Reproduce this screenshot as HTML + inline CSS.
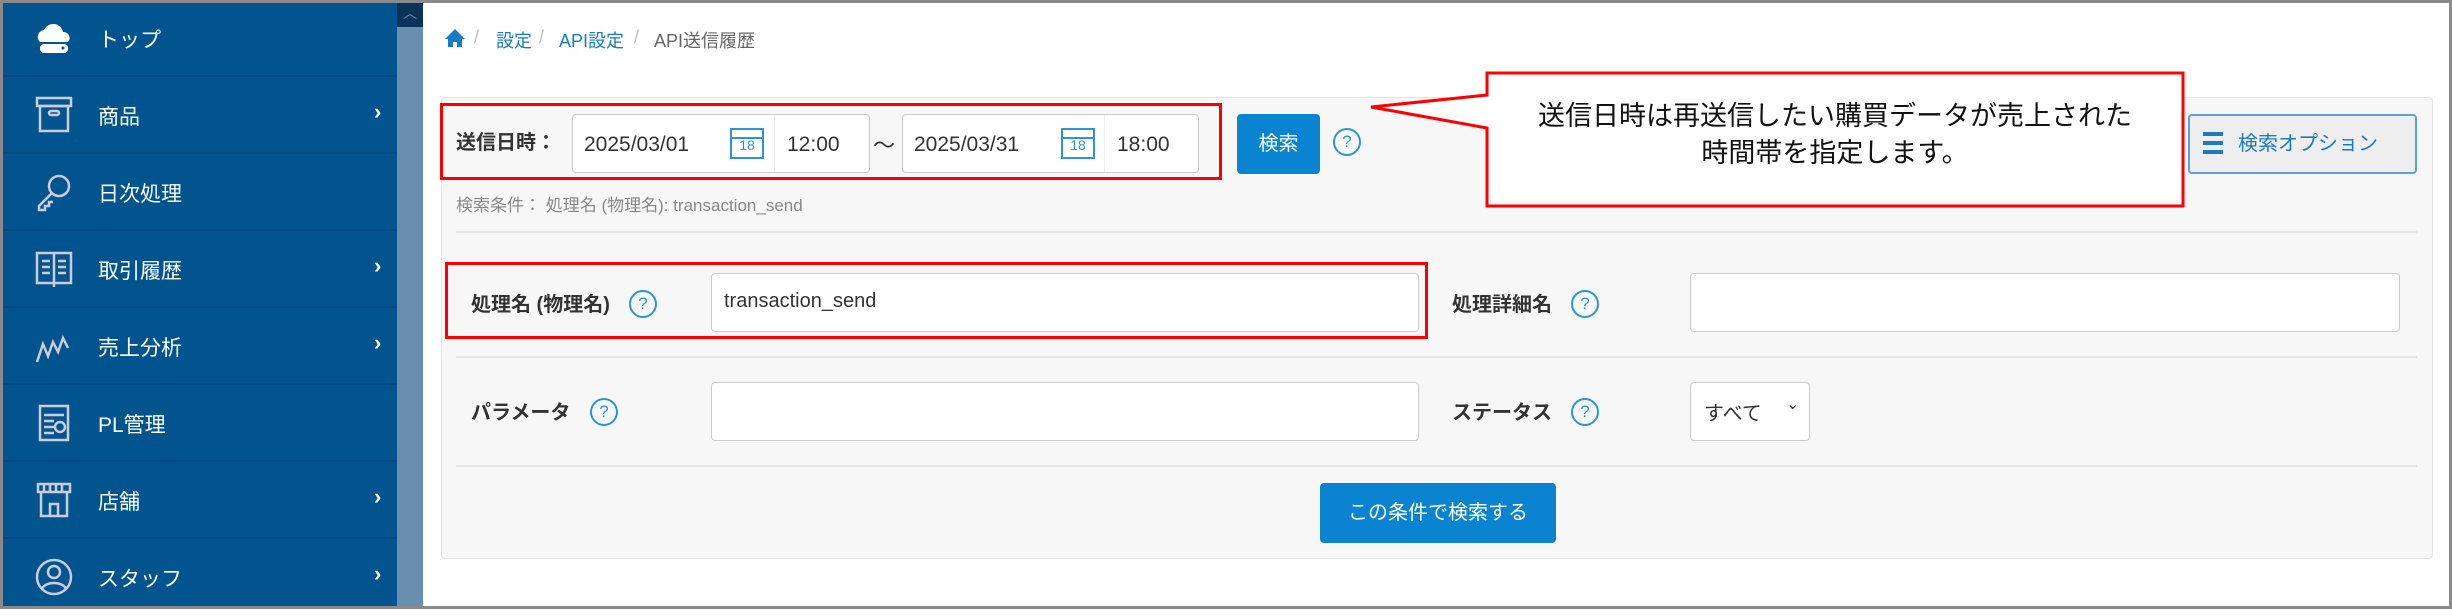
<!DOCTYPE html>
<html><head><meta charset="utf-8"><style>
*{box-sizing:border-box;margin:0;padding:0}
body{width:2452px;height:609px;overflow:hidden;background:#fff;font-family:"Liberation Sans","Noto Sans CJK JP",sans-serif;position:relative}
.a{position:absolute}
.frame{left:0;top:0;width:2452px;height:609px;border:3px solid #8a8a8a;z-index:50;pointer-events:none}
.side{left:0;top:0;width:397px;height:609px;background:#02548f}
.item{position:absolute;left:0;width:397px;height:77px;border-bottom:2px solid #024a80;color:#fff;font-size:21px}
.item .t{position:absolute;left:98px;top:24px}
.item .ar{position:absolute;left:374px;top:22px;font-size:22px;font-weight:bold}
.item svg{position:absolute;left:34px;top:18px}
.scroll{left:397px;top:0;width:26px;height:609px;background:#6a8fae}
.scrolltop{left:397px;top:0;width:26px;height:27px;background:#0b3358;color:#6a8fae;font-size:14px;text-align:center;line-height:27px}
.panel{left:441px;top:97px;width:1992px;height:462px;background:#f7f7f7;border:1px solid #e3e3e3;border-radius:4px}
.inp{position:absolute;background:#fff;border:1px solid #ccc;border-radius:4px}
.lbl{position:absolute;font-size:20px;font-weight:bold;color:#333}
.q{position:absolute;width:28px;height:28px;border:2px solid #2b96d6;border-radius:50%;color:#2b96d6;font-size:17px;text-align:center;line-height:24px}
.hr{position:absolute;left:456px;width:1961px;height:2px;background:#e6e6e6}
.red{position:absolute;border:3px solid #f00}
.dt{position:absolute;font-size:21px;color:#333}
.cal{position:absolute;width:34px;height:31px;border:2px solid #2b96d6;color:#2b96d6;font-size:14px;text-align:center;line-height:31px}
.cal:before{content:"";position:absolute;left:0;right:0;top:7px;height:2px;background:#2b96d6}
</style></head><body>
<div class="a side">
 <div class="item" style="top:0"><svg width="40" height="40" viewBox="0 0 40 40"><path d="M6 24a7 7 0 0 1 4-12 10 10 0 0 1 19 2 6 6 0 0 1 5 10z" fill="#fff"/><rect x="6" y="26" width="28" height="9" rx="4" fill="#fff"/><circle cx="29" cy="30" r="1.5" fill="#02548f"/></svg><span class="t">トップ</span></div>
 <div class="item" style="top:77px"><svg width="40" height="40" viewBox="0 0 40 40" fill="none" stroke="#ccd" stroke-width="2.5"><rect x="3" y="3" width="34" height="8"/><rect x="6" y="11" width="28" height="25"/><rect x="15" y="16" width="10" height="4" rx="2"/></svg><span class="t">商品</span><span class="ar">›</span></div>
 <div class="item" style="top:154px"><svg width="40" height="40" viewBox="0 0 40 40" fill="none" stroke="#ccd" stroke-width="2.5"><circle cx="25" cy="14" r="10"/><path d="M18 21 5 34v4h6v-4h4v-4h4"/></svg><span class="t">日次処理</span></div>
 <div class="item" style="top:231px"><svg width="40" height="40" viewBox="0 0 40 40" fill="none" stroke="#ccd" stroke-width="2.5"><rect x="3" y="4" width="34" height="30"/><path d="M20 4v34M8 12h8M8 18h8M8 24h8M24 12h8M24 18h8M24 24h8"/></svg><span class="t">取引履歴</span><span class="ar">›</span></div>
 <div class="item" style="top:308px"><svg width="40" height="40" viewBox="0 0 40 40" fill="none" stroke="#ccd" stroke-width="2.5"><path d="M3 36 9 18l5 12 5-14 5 10 5-14 5 10"/></svg><span class="t">売上分析</span><span class="ar">›</span></div>
 <div class="item" style="top:385px"><svg width="40" height="40" viewBox="0 0 40 40" fill="none" stroke="#ccd" stroke-width="2.5"><rect x="6" y="3" width="28" height="34"/><path d="M10 12h20M10 18h10M10 24h10M10 30h10"/><circle cx="26" cy="24" r="5"/></svg><span class="t">PL管理</span></div>
 <div class="item" style="top:462px"><svg width="40" height="40" viewBox="0 0 40 40" fill="none" stroke="#ccd" stroke-width="2.5"><path d="M4 4h32v8H4zM7 12v24h26V12M16 36V24h8v12M10 4v8M16 4v8M22 4v8M28 4v8"/></svg><span class="t">店舗</span><span class="ar">›</span></div>
 <div class="item" style="top:539px;border:0"><svg width="40" height="40" viewBox="0 0 40 40" fill="none" stroke="#ccd" stroke-width="2.5"><circle cx="20" cy="20" r="17"/><circle cx="20" cy="15" r="6"/><path d="M8 32c3-8 21-8 24 0"/></svg><span class="t">スタッフ</span><span class="ar">›</span></div>
</div>
<div class="a scroll"></div>
<div class="a scrolltop">︿</div>

<svg class="a" style="left:444px;top:28px" width="22" height="20" viewBox="0 0 22 20"><path d="M11 1 1 11h3v8h5v-5h4v5h5v-8h3z" fill="#1a7ac4"/></svg>
<div class="a" style="left:474px;top:27px;font-size:18px;color:#bbb">/</div>
<div class="a" style="left:496px;top:27px;font-size:18px;color:#1a7ac4">設定</div>
<div class="a" style="left:539px;top:27px;font-size:18px;color:#bbb">/</div>
<div class="a" style="left:559px;top:27px;font-size:18px;color:#1a7ac4">API設定</div>
<div class="a" style="left:634px;top:27px;font-size:18px;color:#bbb">/</div>
<div class="a" style="left:654px;top:27px;font-size:18px;color:#666">API送信履歴</div>

<div class="a panel"></div>
<div class="red" style="left:440px;top:103px;width:782px;height:77px"></div>
<div class="lbl" style="left:456px;top:126px">送信日時：</div>
<div class="inp" style="left:572px;top:114px;width:298px;height:59px"></div>
<div class="a" style="left:774px;top:115px;width:1px;height:57px;background:#eee"></div>
<div class="dt" style="left:584px;top:133px">2025/03/01</div>
<div class="cal" style="left:730px;top:128px">18</div>
<div class="dt" style="left:787px;top:133px">12:00</div>
<div class="dt" style="left:873px;top:128px;font-size:22px">〜</div>
<div class="inp" style="left:902px;top:114px;width:297px;height:59px"></div>
<div class="a" style="left:1104px;top:115px;width:1px;height:57px;background:#eee"></div>
<div class="dt" style="left:914px;top:133px">2025/03/31</div>
<div class="cal" style="left:1061px;top:128px">18</div>
<div class="dt" style="left:1117px;top:133px">18:00</div>
<div class="a" style="left:1237px;top:114px;width:83px;height:60px;background:#0a84d0;border-radius:4px;color:#fff;font-size:20px;text-align:center;line-height:60px">検索</div>
<div class="q" style="left:1333px;top:128px">?</div>
<div class="a" style="left:456px;top:191px;font-size:17px;color:#888">検索条件： 処理名 (物理名): transaction_send</div>
<div class="hr" style="top:231px"></div>

<div class="a" style="left:2188px;top:114px;width:229px;height:60px;background:#eee;border:2px solid #5aa3d6;border-radius:4px;color:#1a7ac4;font-size:20px;line-height:56px;padding-left:48px">検索オプション</div>
<div class="a" style="left:2203px;top:132px;width:20px;height:22px;border-top:4px solid #1a7ac4;border-bottom:4px solid #1a7ac4"></div>
<div class="a" style="left:2203px;top:141px;width:20px;height:4px;background:#1a7ac4"></div>

<div class="red" style="left:445px;top:262px;width:983px;height:77px"></div>
<div class="lbl" style="left:471px;top:288px">処理名 (物理名)</div>
<div class="q" style="left:629px;top:290px">?</div>
<div class="inp" style="left:711px;top:273px;width:708px;height:59px"></div>
<div class="dt" style="left:724px;top:290px;font-size:20px">transaction_send</div>
<div class="lbl" style="left:1452px;top:288px">処理詳細名</div>
<div class="q" style="left:1571px;top:290px">?</div>
<div class="inp" style="left:1690px;top:273px;width:710px;height:59px"></div>
<div class="hr" style="top:356px"></div>

<div class="lbl" style="left:471px;top:396px">パラメータ</div>
<div class="q" style="left:590px;top:398px">?</div>
<div class="inp" style="left:711px;top:382px;width:708px;height:59px"></div>
<div class="lbl" style="left:1452px;top:396px">ステータス</div>
<div class="q" style="left:1571px;top:398px">?</div>
<div class="inp" style="left:1690px;top:382px;width:120px;height:59px"></div>
<div class="dt" style="left:1704px;top:397px;font-size:20px">すべて</div>
<div class="dt" style="left:1786px;top:394px;font-size:16px">⌄</div>
<div class="hr" style="top:465px"></div>
<div class="a" style="left:1320px;top:483px;width:236px;height:60px;background:#0a84d0;border-radius:4px;color:#fff;font-size:20px;text-align:center;line-height:60px">この条件で検索する</div>

<svg class="a" style="left:1360px;top:70px;z-index:5" width="840" height="145" viewBox="1360 70 840 145">
<path d="M1487 73H2183V206H1487V128L1371 107L1487 95Z" fill="#fff" stroke="#f00" stroke-width="3"/>
</svg>
<div class="a" style="left:1487px;top:98px;width:696px;text-align:center;font-size:27px;line-height:37px;color:#111;z-index:6">送信日時は再送信したい購買データが売上された<br>時間帯を指定します。</div>

<div class="a frame"></div>
</body></html>
